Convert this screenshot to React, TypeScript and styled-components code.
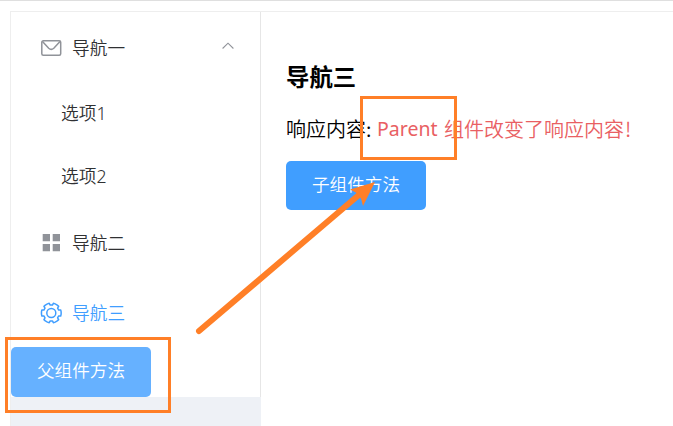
import React from "react";
import styled, { createGlobalStyle } from "styled-components";

const GlobalStyle = createGlobalStyle`
  * { box-sizing: border-box; }
  html, body { margin: 0; background: #fff; overflow: hidden; }
  body { font-family: "Noto Sans", "Noto Sans CJK SC", sans-serif; }
`;

const Page = styled.div`
  position: relative;
  width: 673px;
  height: 426px;
  padding: 10px 0 0 10px;
  border-top: 1px solid #dfdfdf;
  overflow: hidden;
`;

const Container = styled.div`
  display: flex;
  height: 415px;
  border-top: 1px solid #eee;
  border-left: 1px solid #eee;
`;

const Aside = styled.aside`
  width: 250px;
  flex: none;
  background: #eef1f6;
`;

const Menu = styled.nav`
  height: 385px;
  background: #fff;
  border-right: 1px solid #e6e6e6;
`;

const MenuItem = styled.div<{ $active?: boolean; $nested?: boolean }>`
  display: flex;
  align-items: center;
  height: ${(p) => (p.$nested ? "62.5px" : "70px")};
  padding: 0 26px 0 ${(p) => (p.$nested ? "50px" : "29px")};
  font: 350 17.7px/26px "Noto Sans", "Noto Sans CJK SC", sans-serif;
  color: ${(p) => (p.$active ? "#409eff" : "#303133")};
`;

const ItemLabel = styled.span`
  font-family: "Noto Sans CJK SC", sans-serif;
`;

const Icon = styled.svg`
  width: 22px;
  height: 22px;
  flex: none;
  margin: 2px 10px 0 0;
  fill: none;
  stroke: currentColor;
  stroke-width: 1.5;
`;

const MutedIcon = styled(Icon)`
  color: #909399;
`;

const Chevron = styled.svg`
  width: 12px;
  height: 8px;
  margin: -3px 0 0 auto;
  fill: none;
  stroke: #909399;
  stroke-width: 1.1;
`;

const Button = styled.button<{ $hovered?: boolean }>`
  display: flex;
  align-items: center;
  justify-content: center;
  width: 140px;
  height: ${(p) => (p.$hovered ? "50px" : "49px")};
  padding: 0 0 4px;
  border: 0;
  border-radius: 5px;
  background: ${(p) => (p.$hovered ? "#66b1ff" : "#409eff")};
  color: #fff;
  font: 350 17.6px/24px "Noto Sans CJK SC", sans-serif;
`;

const Main = styled.main`
  flex: 1;
  padding: 48px 0 0 25px;
  color: #000;
`;

const Title = styled.h3`
  margin: 0 0 24px;
  font: 700 23.4px/32px "Noto Sans CJK SC", sans-serif;
`;

const Response = styled.p`
  display: flex;
  margin: 0 0 19px;
  font: 350 20px/26px "Noto Sans CJK SC", sans-serif;
  white-space: nowrap;
`;

const Label = styled.span`
  width: 91px;
`;

const Message = styled.span`
  display: flex;
  color: #e95f63;
`;

const Source = styled.span`
  width: 67px;
  font: 400 19.5px/26px "Noto Sans", sans-serif;
`;

const Exclamation = styled.span`
  margin-left: 1px;
`;

const Annotations = styled.svg`
  position: absolute;
  left: 0;
  top: -1px;
  width: 673px;
  height: 426px;
  pointer-events: none;
`;

const gearPath = (() => {
  const points: string[] = [];
  for (let i = 0; i < 6; i++) {
    const offsets: [number, number][] = [[-22, 8], [-18, 9.9], [-7, 9.9], [7, 9.9], [18, 9.9], [22, 8]];
    offsets.forEach(([offset, radius]) => {
      const angle = ((i * 60 + offset) * Math.PI) / 180;
      points.push(`${11.3 + radius * Math.cos(angle)} ${11 + radius * Math.sin(angle)}`);
    });
  }
  return `M${points.join("L")}Z`;
})();

export default function App() {
  return (
    <>
      <GlobalStyle />
      <Page>
        <Container>
          <Aside>
            <Menu>
              <MenuItem>
                <MutedIcon viewBox="0 0 22 22">
                  <rect x="1.8" y="3.8" width="18.9" height="14.4" rx="1.5" />
                  <path d="M2.5 4.5 8.7 11.2Q11.2 13.6 13.8 11.2L20 4.5" />
                </MutedIcon>
                <ItemLabel>导航一</ItemLabel>
                <Chevron viewBox="0 0 12 8">
                  <path d="M.6 6.5 6 1.2 11.4 6.5" />
                </Chevron>
              </MenuItem>
              <MenuItem $nested>选项1</MenuItem>
              <MenuItem $nested>选项2</MenuItem>
              <MenuItem>
                <MutedIcon viewBox="0 0 22 22">
                  <path fill="currentColor" stroke="none" d="M2.7 2h7.3v7.3H2.7zM12.7 2h7.3v7.3h-7.3zM2.7 12h7.3v7.3H2.7zM12.7 12h7.3v7.3h-7.3z" />
                </MutedIcon>
                <ItemLabel>导航二</ItemLabel>
              </MenuItem>
              <MenuItem $active>
                <Icon viewBox="0 0 22 22">
                  <path d={gearPath} strokeLinejoin="round" />
                  <circle cx="11.3" cy="11" r="4.5" />
                </Icon>
                <ItemLabel>导航三</ItemLabel>
              </MenuItem>
              <Button $hovered>父组件方法</Button>
            </Menu>
          </Aside>
          <Main>
            <Title>导航三</Title>
            <Response>
              <Label>响应内容:</Label>
              <Message>
                <Source>Parent</Source>
                <span>组件改变了响应内容</span>
                <Exclamation>!</Exclamation>
              </Message>
            </Response>
            <Button>子组件方法</Button>
          </Main>
        </Container>
        <Annotations viewBox="0 0 673 426">
          <g fill="none" stroke="#ff7f27" strokeWidth="3">
            <rect x="361.5" y="97.5" width="94" height="61" />
            <rect x="6.5" y="338.5" width="163" height="73" />
            <path d="M199 331 360 194" strokeWidth="6" strokeLinecap="round" />
          </g>
          <path fill="#ff7f27" d="M375 182 350 189.5 356 192.5 361 198.5 363 206Z" />
        </Annotations>
      </Page>
    </>
  );
}
